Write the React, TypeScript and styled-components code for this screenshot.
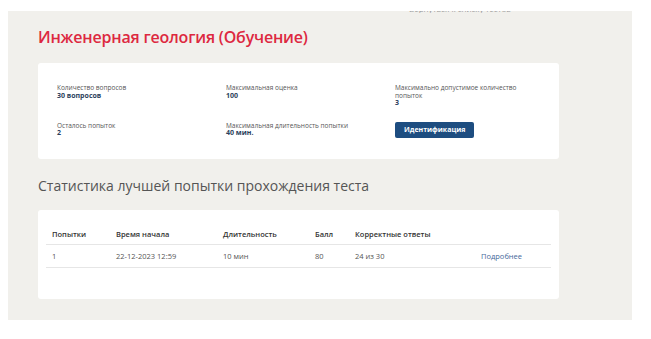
import styled, { createGlobalStyle } from 'styled-components';

const colors = {
  page: '#f1f0ec',
  red: '#dd2840',
  navy: '#2c3f5c',
  text: '#555555',
  dark: '#333333',
  button: '#1d4d80',
  link: '#46699a',
  line: '#e6e6e6',
};

const GlobalStyle = createGlobalStyle`
  body {
    margin: 0;
    background: #ffffff;
    font-family: "Open Sans", "Liberation Sans", sans-serif;
  }
`;

const Panel = styled.main`
  margin: 11px 0 0 8px;
  width: 624px;
  height: 309px;
  box-sizing: border-box;
  padding: 0 73px 0 30px;
  background: ${colors.page};
`;

// обрезанный хвост текста сверху (видна только нижняя кромка)
const Crumb = styled.div`
  height: 2px;
  overflow: hidden;
  padding-left: 371px;
  font-size: 8px;
  line-height: 9px;
  color: #9a9a9a;

  & span {
    display: block;
    transform: translateY(-7px);
  }
`;

const Title = styled.h1`
  margin: 12px 0 14px;
  font-size: 16px;
  line-height: 24px;
  font-weight: 600;
  letter-spacing: -0.2px;
  color: ${colors.red};
`;

const Card = styled.section<{ $pad: string }>`
  background: #fff;
  border-radius: 3px;
  padding: ${(p) => p.$pad};
`;

const InfoGrid = styled.div`
  display: grid;
  grid-template-columns: 169px 169px 130px;
  row-gap: 14px;
  align-items: start;
`;

const Field = styled.div`
  display: flex;
  flex-direction: column;
  align-items: flex-start;
`;

const Label = styled.div`
  font-size: 6.5px;
  line-height: 7.5px;
  color: ${colors.text};
`;

const Value = styled.div`
  font-size: 7px;
  line-height: 8.5px;
  font-weight: 700;
  color: ${colors.navy};
`;

const Button = styled.button`
  display: block;
  height: 16px;
  padding: 0 9px;
  border: none;
  border-radius: 2px;
  background: ${colors.button};
  color: #fff;
  font-family: inherit;
  font-size: 7px;
  font-weight: 700;
`;

const Heading = styled.h2`
  margin: 17px 0 14px;
  font-size: 14px;
  line-height: 20px;
  font-weight: 400;
  color: #555;
`;

const Table = styled.table`
  width: 100%;
  border-collapse: collapse;
  table-layout: fixed;
`;

const Th = styled.th<{ $w?: number }>`
  width: ${(p) => (p.$w ? `${p.$w - 12}px` : 'auto')};
  height: 20px;
  padding: 0 6px;
  text-align: left;
  font-size: 7.5px;
  font-weight: 600;
  color: ${colors.dark};
  border-bottom: 1px solid ${colors.line};
`;

const Td = styled.td`
  height: 22px;
  padding: 0 6px;
  font-size: 7.5px;
  color: ${colors.text};
  border-bottom: 1px solid ${colors.line};
`;

const More = styled.a`
  color: ${colors.link};
  text-decoration: none;
`;

const info = [
  { label: 'Количество вопросов', value: '30 вопросов' },
  { label: 'Максимальная оценка', value: '100' },
  { label: 'Максимально допустимое количество попыток', value: '3' },
  { label: 'Осталось попыток', value: '2' },
  { label: 'Максимальная длительность попытки', value: '40 мин.' },
];

export default function App() {
  return (
    <>
      <GlobalStyle />
      <Panel>
        <Crumb>
          <span>Вернуться к списку тестов</span>
        </Crumb>
        <Title>Инженерная геология (Обучение)</Title>
        <Card $pad="21px 19px">
          <InfoGrid>
            {info.map((i) => (
              <Field key={i.label}>
                <Label>{i.label}</Label>
                <Value>{i.value}</Value>
              </Field>
            ))}
            <Field>
              <Button>Идентификация</Button>
            </Field>
          </InfoGrid>
        </Card>
        <Heading>Статистика лучшей попытки прохождения теста</Heading>
        <Card $pad="14px 8px 31px">
          <Table>
            <thead>
              <tr>
                <Th $w={64}>Попытки</Th>
                <Th $w={107}>Время начала</Th>
                <Th $w={92}>Длительность</Th>
                <Th $w={40}>Балл</Th>
                <Th $w={126}>Корректные ответы</Th>
                <Th />
              </tr>
            </thead>
            <tbody>
              <tr>
                <Td>1</Td>
                <Td>22-12-2023 12:59</Td>
                <Td>10 мин</Td>
                <Td>80</Td>
                <Td>24 из 30</Td>
                <Td>
                  <More href="#">Подробнее</More>
                </Td>
              </tr>
            </tbody>
          </Table>
        </Card>
      </Panel>
    </>
  );
}
